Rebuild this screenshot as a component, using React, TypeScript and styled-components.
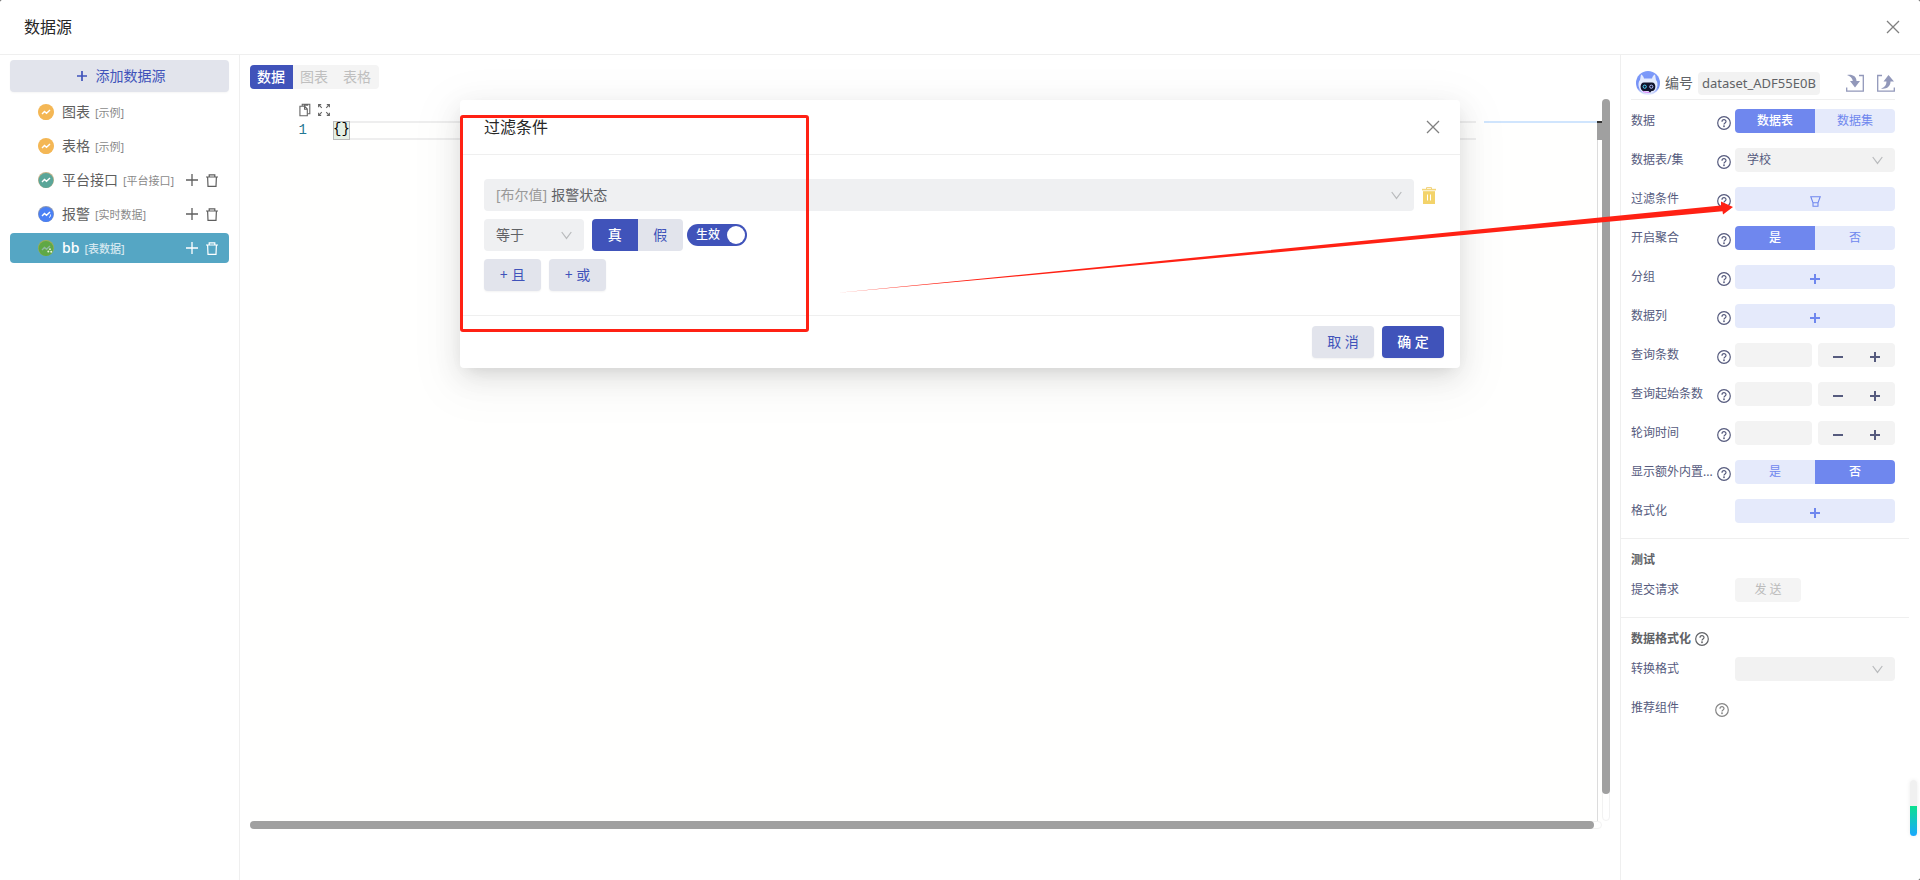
import React from "react";
import styled, { createGlobalStyle, css } from "styled-components";

const Global = createGlobalStyle`
  *, *::before, *::after { box-sizing: border-box; }
  body {
    margin: 0;
    background: #444;
    color: #606266;
    font-family: "Noto Sans", "Noto Sans CJK SC", sans-serif;
    font-size: 14px;
    line-height: 20px;
  }
  button, input, select { font: inherit; color: inherit; margin: 0; }
  h1, h2, h3, ul { margin: 0; padding: 0; font: inherit; }
`;

const primary = "#4053ba";
const accent = "#6f87ee";
const accentSoft = "#e5eafb";
const line = "#efefef";
const slate = "#565b7e";

/* ---------- shell ---------- */

const Shell = styled.div`
  position: relative;
  display: flex;
  flex-direction: column;
  min-height: 100vh;
  background: #fff;
  border-radius: 2px 2px 2px 0;
`;

const TopBar = styled.header`
  display: flex;
  align-items: center;
  justify-content: space-between;
  height: 55px;
  padding: 0 20px 0 24px;
  border-bottom: 1px solid ${line};
`;

const Title = styled.h1`
  font-size: 16px;
  line-height: 24px;
  color: #262626;
`;

const IconButton = styled.button`
  display: inline-flex;
  align-items: center;
  justify-content: center;
  padding: 0;
  border: 0;
  background: none;
  color: ${(p) => p.color || "inherit"};
  cursor: pointer;
`;

const Columns = styled.div`
  display: flex;
  flex: 1;
`;

/* ---------- source list ---------- */

const Sidebar = styled.nav`
  display: flex;
  flex-direction: column;
  flex: none;
  gap: 5px;
  width: 240px;
  padding: 5px 10px;
  border-right: 1px solid ${line};
`;

const AddButton = styled.button`
  display: flex;
  align-items: center;
  justify-content: center;
  gap: 9px;
  height: 32px;
  padding: 0 6px 0 9px;
  border: 0;
  border-radius: 4px;
  background: #e2e4ec;
  box-shadow: 0 1px 2px rgba(0, 0, 0, 0.04);
  color: ${primary};
`;

const SourceList = styled.ul`
  display: flex;
  flex-direction: column;
  gap: 4px;
  list-style: none;
`;

const SourceItem = styled.li<{ $active?: boolean }>`
  display: flex;
  align-items: center;
  height: 30px;
  padding: 0 11px 0 28px;
  border-radius: 4px;
  color: ${(p) => (p.$active ? "#fff" : "#5f5f5f")};
  font-weight: ${(p) => (p.$active ? 500 : 400)};
  background: ${(p) => (p.$active ? "#55a6c4" : "transparent")};
`;

const SourceName = styled.span`
  margin-left: 8px;
`;

const SourceTag = styled.small`
  flex: 1;
  margin-left: 5px;
  padding-top: 2px;
  font-size: 11px;
  opacity: 0.75;
`;

const SourceActions = styled.span`
  display: flex;
  gap: 8px;
`;

/* ---------- editor ---------- */

const Main = styled.main`
  flex: 1;
  min-width: 0;
  padding: 10px 10px 50px 10px;
`;

const Tabs = styled.div`
  display: flex;
  width: fit-content;
  border-radius: 4px;
  overflow: hidden;
  background: #f4f4f4;
`;

const Tab = styled.button<{ $active?: boolean }>`
  height: 24px;
  padding: 0 8px 0 7px;
  border: 0;
  background: ${(p) => (p.$active ? primary : "transparent")};
  color: ${(p) => (p.$active ? "#fff" : "#bfbfbf")};
  font-weight: ${(p) => (p.$active ? 500 : 400)};
`;

const EditorFrame = styled.div`
  display: grid;
  grid-template-columns: 1fr 8px;
  grid-template-rows: 722px 8px;
  margin-top: 10px;
`;

const EditorPane = styled.div`
  display: flex;
  flex-direction: column;
`;

const EditorTools = styled.div`
  display: flex;
  gap: 7px;
  height: 22px;
  padding-left: 49px;
  color: #666;
`;

const CodeArea = styled.div`
  display: flex;
  flex: 1;
  background: #fffffe;
  font-family: "Liberation Mono", monospace;
  line-height: 19px;
`;

const LineNumber = styled.span`
  width: 57px;
  text-align: right;
  color: #237893;
`;

const CodeLine = styled.code`
  flex: 1;
  height: 19px;
  margin-left: 26px;
  font: inherit;
  color: #000;
  border: solid #eee;
  border-width: 2px 0;
  line-height: 15px;
`;

const Bracket = styled.span`
  display: block;
  width: fit-content;
  height: 19px;
  margin: -2px 0;
  line-height: 17px;
  outline: 1px solid #b9b9b9;
  outline-offset: -1px;
  background: #e4efe4;
`;

const Minimap = styled.div`
  width: 113px;
  height: 2px;
  margin-left: 8px;
  background: #d0e5fd;
`;

const Ruler = styled.div`
  width: 5px;
  border-left: 1px solid #dcdcdc;

  &::before {
    content: "";
    display: block;
    height: 19px;
    margin-left: -1px;
    background: #a0a0a0;
    border-top: 2px solid #333;
  }
`;

const Track = styled.div`
  display: flex;
  border: 1px solid #f2f2f2;
  border-radius: 4px;
`;

const VTrack = styled(Track)`
  height: 722px;
`;

const HTrack = styled(Track)`
  height: 8px;
`;

const VThumb = styled.div`
  flex: none;
  width: 8px;
  height: 695px;
  margin: -1px;
  border-radius: 4px;
  background: #a0a0a0;
`;

const HThumb = styled.div`
  flex: 1;
  height: 8px;
  margin: -1px 7px -1px -1px;
  border-radius: 4px;
  background: #a0a0a0;
`;

/* ---------- settings panel ---------- */

const Panel = styled.aside`
  flex: none;
  width: 300px;
  padding-right: 11px;
  border-left: 1px solid ${line};
  font-size: 12px;
`;

const PanelHead = styled.div`
  display: flex;
  align-items: center;
  height: 45px;
  margin: 0 14px 8px 10px;
  padding: 12px 0 0 5px;
  border-bottom: 1px solid ${line};
  font-size: 14px;
`;

const CodeLabel = styled.label`
  margin: 0 5px;
`;

const CodeInput = styled.input`
  width: 122px;
  height: 23px;
  padding: 0 4px;
  border: 0;
  border-radius: 4px;
  background: #f2f2f2;
  font-size: 13px;
`;

const HeadActions = styled.span`
  display: flex;
  flex: 1;
  justify-content: flex-end;
  gap: 13px;
  color: #9298ba;
`;

const Section = styled.section`
  display: flex;
  flex-direction: column;
  gap: 15px;
  padding: 1px 14px 15px 10px;

  & + & {
    border-top: 1px solid ${line};
    padding-top: 10px;
  }
`;

const SectionTitle = styled.h2`
  display: flex;
  align-items: center;
  gap: 4px;
  height: 22px;
  margin-bottom: -8px;
  font-weight: 700;
`;

const Row = styled.div`
  display: grid;
  grid-template-columns: 82px 18px 160px;
  justify-content: space-between;
  align-items: center;
  height: 24px;
  color: ${slate};
`;

const RowLabel = styled.span`
  white-space: nowrap;
  overflow: hidden;
  text-overflow: ellipsis;
`;

const HelpSlot = styled.span<{ $muted?: boolean }>`
  display: flex;
  padding-top: 4px;
  color: ${(p) => (p.$muted ? "#858585" : slate)};
  margin-left: ${(p) => (p.$muted ? "0" : "2px")};
`;

const SoftButton = styled.button`
  display: flex;
  align-items: center;
  justify-content: center;
  height: 24px;
  padding: 4px 0 0;
  border: 0;
  border-radius: 4px;
  background: ${accentSoft};
  color: ${accent};
`;

const SendButton = styled.button`
  width: 66px;
  height: 24px;
  border: 0;
  border-radius: 4px;
  background: #f4f4f4;
  color: #bbb;
`;

const Stepper = styled.div`
  display: grid;
  grid-template-columns: 1fr 1fr;
  gap: 6px;
`;

const StepInput = styled.input`
  width: 100%;
  height: 24px;
  padding: 0 8px;
  border: 0;
  border-radius: 4px;
  background: #f3f3f3;
`;

const StepButtons = styled.span`
  display: flex;
  align-items: center;
  justify-content: center;
  gap: 27px;
  padding-top: 4px;
  border-radius: 4px;
  background: #f3f3f3;
`;

/* ---------- shared form controls ---------- */

const segmentTone = {
  panel: css`
    height: 24px;
    --on: ${accent};
    --off: ${accentSoft};
  `,
  dialog: css`
    width: 91px;
    height: 32px;
    --on: ${primary};
    --off: #e2e4ec;
  `,
};

const Segment = styled.div<{ $tone: "panel" | "dialog" }>`
  display: grid;
  grid-template-columns: 1fr 1fr;
  border-radius: 4px;
  overflow: hidden;
  ${(p) => segmentTone[p.$tone]}
`;

const SegmentOption = styled.label`
  display: flex;
  align-items: center;
  justify-content: center;
  background: var(--off);
  color: var(--on);

  &:has(input:checked) {
    background: var(--on);
    color: #fff;
    font-weight: 500;
  }
`;

const HiddenInput = styled.input`
  appearance: none;
  width: 0;
  height: 0;
`;

const SelectShell = styled.div<{ $width?: string; $tone?: "panel" | "dialog" }>`
  display: flex;
  align-items: center;
  gap: 4px;
  width: ${(p) => p.$width || "100%"};
  height: ${(p) => (p.$tone === "dialog" ? "32px" : "24px")};
  padding: 0 12px;
  border-radius: 4px;
  background: ${(p) => (p.$tone === "dialog" ? "#eff0f2" : "#f2f2f2")};
`;

const Select = styled.select`
  appearance: none;
  flex: 1;
  min-width: 0;
  height: 100%;
  padding: 0;
  border: 0;
  background: none;
`;

const Prefix = styled.span`
  color: #999;
`;

/* ---------- dialog ---------- */

const Dialog = styled.section`
  position: absolute;
  top: 100px;
  left: 50%;
  width: 1000px;
  margin-left: -500px;
  border-radius: 4px;
  background: #fff;
  box-shadow: 0 6px 16px -8px rgba(0, 0, 0, 0.12), 0 9px 28px rgba(0, 0, 0, 0.1),
    0 12px 48px 16px rgba(0, 0, 0, 0.03);
`;

const DialogHead = styled.div`
  display: flex;
  align-items: center;
  justify-content: space-between;
  height: 55px;
  padding: 0 20px 0 24px;
  border-bottom: 1px solid ${line};
`;

const DialogBody = styled.div`
  display: flex;
  flex-direction: column;
  gap: 8px;
  padding: 24px;
`;

const Condition = styled.div`
  display: flex;
  align-items: center;
  gap: 8px;
`;

const Switch = styled.label`
  display: flex;
  align-items: center;
  justify-content: space-between;
  width: 60px;
  height: 22px;
  margin-left: -4px;
  padding: 0 2px 0 9px;
  border-radius: 11px;
  background: ${primary};
  color: #fff;
  font-size: 12px;
  font-weight: 500;

  &::after {
    content: "";
    width: 18px;
    height: 18px;
    border-radius: 50%;
    background: #fff;
  }
`;

const DialogButton = styled.button<{ $primary?: boolean; $width?: string }>`
  min-width: ${(p) => p.$width || "62px"};
  height: 32px;
  padding: 0 12px;
  border: 0;
  border-radius: 4px;
  background: ${(p) => (p.$primary ? primary : "#e2e4ec")};
  box-shadow: 0 1px 2px rgba(0, 0, 0, 0.05);
  color: ${(p) => (p.$primary ? "#fff" : primary)};
  font-weight: ${(p) => (p.$primary ? 500 : 400)};
`;

const DialogFoot = styled.div`
  display: flex;
  justify-content: flex-end;
  gap: 8px;
  padding: 10px 16px;
  border-top: 1px solid ${line};
`;

/* ---------- annotations and floating bits ---------- */

const Highlight = styled.div`
  position: absolute;
  top: 115px;
  left: 50%;
  width: 349px;
  height: 217px;
  margin-left: -500px;
  border: 3px solid #ff2114;
  border-radius: 3px;
  pointer-events: none;
`;

const Pointer = styled.svg`
  position: absolute;
  top: 200px;
  right: 187px;
  pointer-events: none;
`;

const EdgeMeter = styled.div`
  position: absolute;
  top: 780px;
  right: 3px;
  width: 7px;
  height: 56px;
  border-radius: 4px;
  background: linear-gradient(#f0f0f0 26px, #0be08f 26px, #1aa8ff);
  box-shadow: 0 0 4px rgba(0, 0, 0, 0.08);
`;

/* ---------- icons ---------- */

const Close = () => (
  <svg width="14" height="14" viewBox="0 0 14 14" fill="none" stroke="#808080" strokeWidth="1.3">
    <path d="M1 1l12 12M13 1L1 13" />
  </svg>
);

const Plus = ({ size = 10, weight = 2 }: { size?: number; weight?: number }) => (
  <svg width={size} height={size} viewBox="0 0 10 10" fill="none" stroke="currentColor" strokeWidth={weight}>
    <path d="M5 0v10M0 5h10" />
  </svg>
);

const Minus = () => (
  <svg width="10" height="10" viewBox="0 0 10 10" stroke="currentColor" strokeWidth="2">
    <path d="M0 5h10" />
  </svg>
);

const Bin = () => (
  <svg width="12" height="13" viewBox="0 0 12 13" fill="none" stroke="currentColor" strokeWidth="1.2">
    <path d="M0 3h12M3.2 3V.8h5.6V3M1.6 3l.4 9.3h8l.4-9.3" />
  </svg>
);

const SolidBin = () => (
  <svg width="14" height="17" viewBox="0 0 14 17">
    <path d="M4.5 2V.6h5V2" fill="none" stroke="#f2d27a" />
    <path d="M0 1.8h14v1.6H0z" fill="#f3d67b" />
    <path d="M1 4.2h12V17H1z" fill="#f3d36a" />
    <path d="M5.5 7.5v6M8.5 7.5v6" stroke="#fff" />
  </svg>
);

const Chevron = () => (
  <svg width="11" height="9" viewBox="0 0 11 9" fill="none" stroke="#b9bbbd" strokeWidth="1.2">
    <path d="M.7 1l4.8 6.4L10.3 1" />
  </svg>
);

const Help = () => (
  <svg width="14" height="14" viewBox="0 0 14 14" fill="none" stroke="currentColor" strokeWidth="1.2">
    <circle cx="7" cy="7" r="6.3" />
    <path d="M5 5.700c0-2.700 4-2.700 4-.1 0 1.400-2 1.400-2 2.900" />
    <circle cx="7" cy="10.300" r=".35" />
  </svg>
);

const Funnel = () => (
  <svg width="11" height="11" viewBox="0 0 11 11" fill="none" stroke="currentColor" strokeWidth="1.1">
    <path d="M.8.8h9.400L8 6.800v3.500H3V6.800zM3 6.800h5" />
  </svg>
);

const Copy = () => (
  <svg width="12" height="14" viewBox="0 0 13 15" fill="none" stroke="currentColor" strokeWidth="1.2">
    <path d="M3.500 3V1.200h8.200v10.300H9.700M1 3.500h5.200l2.800 3V13.700H1zM6 3.500v3.200h3M5 2.200h5" />
  </svg>
);

const Expand = () => (
  <svg width="12" height="12" viewBox="0 0 12 12" fill="none" stroke="currentColor" strokeWidth="1.1">
    <path d="M.6 3.200V.6h2.600M.6.600l3.200 3.200M8.800.6h2.600v2.600M11.400.600L8.200 3.800M.6 8.800v2.600h2.600M.6 11.400l3.200-3.200M11.400 8.800v2.600H8.800M11.400 11.400L8.200 8.200" />
  </svg>
);

const SourceIcon = ({ fill, rim, kind }: { fill: string; rim?: string; kind?: "live" | "table" }) => (
  <svg width="16" height="16" viewBox="0 0 16 16" fill="none">
    <circle cx="8" cy="8" r="8" fill={rim || fill} />
    <circle cx="8" cy="8.500" r="7.400" fill={fill} />
    <path d="M4 10l2.500-2.500L8.500 9.300 12 6" stroke={kind === "table" ? "#8fb8a0" : "#fff"} strokeWidth="1.400" />
    {kind === "live" && <path d="M11 11.500c1.500-.6 1.800-2 1.400-3" stroke="#fff" />}
    {kind === "table" && (
      <g fill="#e8f3dc">
        <circle cx="12" cy="9.200" r=".9" />
        <circle cx="10.300" cy="11.500" r="1" />
        <circle cx="13.200" cy="11.800" r="1" />
      </g>
    )}
  </svg>
);

const Robot = () => (
  <svg width="24" height="24" viewBox="0 0 24 24">
    <defs>
      <linearGradient id="robotBg" x1="0" y1="0" x2="0" y2="1">
        <stop offset="0" stopColor="#7d9bfa" />
        <stop offset=".7" stopColor="#7590f5" />
        <stop offset="1" stopColor="#eef1ff" />
      </linearGradient>
    </defs>
    <circle cx="12" cy="12" r="12" fill="url(#robotBg)" />
    <path d="M5 3.500c1.500.5 2.500 2 3 4h8c.5-2 1.500-3.500 3-4l1 5.500c1.500 1.500 1.800 4 1.300 6.500C20.500 20 16 22.500 12 22.500S3.500 20 2.700 15.500C2.200 13 2.500 10.500 4 9z" fill="#e3eafe" />
    <path d="M8 11.500h8c4.500 0 4.500 8.500 0 8.500h-.5L14 21.800 12.500 20H8c-4.500 0-4.500-8.500 0-8.500z" fill="#10122b" />
    <path d="M7 20.300c2 1.200 5 1.200 6.500 1" fill="none" stroke="#d35af0" strokeWidth=".8" />
    <circle cx="8.700" cy="15.700" r="1.600" fill="none" stroke="#4fd8ff" strokeWidth="1" />
    <circle cx="15.300" cy="15.700" r="1.600" fill="none" stroke="#b9c4ff" strokeWidth="1" />
  </svg>
);

const ImportIcon = () => (
  <svg width="18" height="18" viewBox="0 0 18 18" fill="none">
    <path d="M13 1.500h4.300v15.700H.7V13.500" stroke="currentColor" strokeWidth="1.300" />
    <path d="M1 1c5-1 9.500 1 9.500 6h3.500l-5 6.500L4 7h2.800C6.500 4 4 2 1 1z" fill="currentColor" />
  </svg>
);

const ExportIcon = () => (
  <svg width="18" height="18" viewBox="0 0 18 18" fill="none">
    <path d="M5 1.500H.7v15.700h16.600V13.500" stroke="currentColor" strokeWidth="1.300" />
    <path d="M4 14.500c5 1 9.500-1.500 9.500-7H17L11.500 1 6.500 7.500h3c0 3.500-2 6-5.500 7z" fill="currentColor" />
  </svg>
);

/* ---------- pieces ---------- */

const sources = [
  { name: "图表", tag: "[示例]", icon: <SourceIcon fill="#f4b755" /> },
  { name: "表格", tag: "[示例]", icon: <SourceIcon fill="#f4b755" /> },
  { name: "平台接口", tag: "[平台接口]", icon: <SourceIcon fill="#5aa699" rim="#c3b28a" />, editable: true },
  { name: "报警", tag: "[实时数据]", icon: <SourceIcon fill="#4a80f5" rim="#8b97b5" kind="live" />, editable: true },
  { name: "bb", tag: "[表数据]", icon: <SourceIcon fill="#5fa845" rim="#9db055" kind="table" />, editable: true, active: true },
];

type ChoiceProps = { name: string; options: string[]; value: number; tone?: "panel" | "dialog" };

const Choice = ({ name, options, value, tone = "panel" }: ChoiceProps) => (
  <Segment $tone={tone} role="radiogroup" aria-label={name}>
    {options.map((o, i) => (
      <SegmentOption key={o}>
        <HiddenInput type="radio" name={name} defaultChecked={i === value} />
        {o}
      </SegmentOption>
    ))}
  </Segment>
);

const NumberField = ({ name }: { name: string }) => (
  <Stepper>
    <StepInput type="text" inputMode="numeric" aria-label={name} />
    <StepButtons>
      <IconButton aria-label="减少"><Minus /></IconButton>
      <IconButton aria-label="增加"><Plus /></IconButton>
    </StepButtons>
  </Stepper>
);

const AddField = ({ name }: { name: string }) => (
  <SoftButton aria-label={name}><Plus /></SoftButton>
);

type DropProps = { name: string; value: string; prefix?: string; width?: string; tone?: "panel" | "dialog" };

const DropDown = ({ name, value, prefix, width, tone }: DropProps) => (
  <SelectShell $width={width} $tone={tone}>
    {prefix && <Prefix>{prefix}</Prefix>}
    <Select aria-label={name} defaultValue={value}>
      <option>{value}</option>
    </Select>
    <Chevron />
  </SelectShell>
);

type FieldProps = { label: string; help?: "normal" | "muted"; children?: React.ReactNode };

const Field = ({ label, help, children }: FieldProps) => (
  <Row>
    <RowLabel>{label}</RowLabel>
    <HelpSlot $muted={help === "muted"}>{help && <Help />}</HelpSlot>
    {children || <span />}
  </Row>
);

export default function App() {
  return (
    <>
      <Global />
      <Shell>
        <TopBar>
          <Title>数据源</Title>
          <IconButton aria-label="关闭"><Close /></IconButton>
        </TopBar>

        <Columns>
          <Sidebar>
            <AddButton><Plus weight={1.7} />添加数据源</AddButton>
            <SourceList>
              {sources.map((s) => (
                <SourceItem key={s.name} $active={s.active}>
                  {s.icon}
                  <SourceName>{s.name}</SourceName>
                  <SourceTag>{s.tag}</SourceTag>
                  {s.editable && (
                    <SourceActions>
                      <IconButton aria-label="新增"><Plus size={12} weight={1.1} /></IconButton>
                      <IconButton aria-label="删除"><Bin /></IconButton>
                    </SourceActions>
                  )}
                </SourceItem>
              ))}
            </SourceList>
          </Sidebar>

          <Main>
            <Tabs role="tablist">
              <Tab role="tab" $active>数据</Tab>
              <Tab role="tab">图表</Tab>
              <Tab role="tab">表格</Tab>
            </Tabs>
            <EditorFrame>
              <EditorPane>
                <EditorTools>
                  <IconButton aria-label="复制"><Copy /></IconButton>
                  <IconButton aria-label="展开"><Expand /></IconButton>
                </EditorTools>
                <CodeArea>
                  <LineNumber>1</LineNumber>
                  <CodeLine><Bracket>{"{}"}</Bracket></CodeLine>
                  <Minimap />
                  <Ruler />
                </CodeArea>
              </EditorPane>
              <VTrack><VThumb /></VTrack>
              <HTrack><HThumb /></HTrack>
            </EditorFrame>
          </Main>

          <Panel>
            <PanelHead>
              <Robot />
              <CodeLabel htmlFor="code">编号</CodeLabel>
              <CodeInput id="code" defaultValue="dataset_ADF55E0B" />
              <HeadActions>
                <IconButton aria-label="导入"><ImportIcon /></IconButton>
                <IconButton aria-label="导出"><ExportIcon /></IconButton>
              </HeadActions>
            </PanelHead>
            <Section>
              <Field label="数据" help="normal"><Choice name="数据" options={["数据表", "数据集"]} value={0} /></Field>
              <Field label="数据表/集" help="normal"><DropDown name="数据表/集" value="学校" /></Field>
              <Field label="过滤条件" help="normal"><SoftButton aria-label="过滤条件"><Funnel /></SoftButton></Field>
              <Field label="开启聚合" help="normal"><Choice name="开启聚合" options={["是", "否"]} value={0} /></Field>
              <Field label="分组" help="normal"><AddField name="分组" /></Field>
              <Field label="数据列" help="normal"><AddField name="数据列" /></Field>
              <Field label="查询条数" help="normal"><NumberField name="查询条数" /></Field>
              <Field label="查询起始条数" help="normal"><NumberField name="查询起始条数" /></Field>
              <Field label="轮询时间" help="normal"><NumberField name="轮询时间" /></Field>
              <Field label="显示额外内置..." help="normal"><Choice name="显示额外内置" options={["是", "否"]} value={1} /></Field>
              <Field label="格式化"><AddField name="格式化" /></Field>
            </Section>
            <Section>
              <SectionTitle>测试</SectionTitle>
              <Field label="提交请求"><SendButton disabled>发 送</SendButton></Field>
            </Section>
            <Section>
              <SectionTitle>数据格式化<Help /></SectionTitle>
              <Field label="转换格式"><DropDown name="转换格式" value="" /></Field>
              <Field label="推荐组件" help="muted" />
            </Section>
          </Panel>
        </Columns>

        <Dialog role="dialog" aria-labelledby="filter-title">
          <DialogHead>
            <Title as="h2" id="filter-title">过滤条件</Title>
            <IconButton aria-label="关闭"><Close /></IconButton>
          </DialogHead>
          <DialogBody>
            <Condition>
              <DropDown name="字段" prefix="[布尔值]" value="报警状态" tone="dialog" />
              <IconButton aria-label="删除条件"><SolidBin /></IconButton>
            </Condition>
            <Condition>
              <DropDown name="比较" value="等于" width="100px" tone="dialog" />
              <Choice name="值" options={["真", "假"]} value={0} tone="dialog" />
              <Switch>
                生效
                <HiddenInput type="checkbox" role="switch" defaultChecked />
              </Switch>
            </Condition>
            <Condition>
              <DialogButton $width="57px">+ 且</DialogButton>
              <DialogButton $width="57px">+ 或</DialogButton>
            </Condition>
          </DialogBody>
          <DialogFoot>
            <DialogButton>取 消</DialogButton>
            <DialogButton $primary>确 定</DialogButton>
          </DialogFoot>
        </Dialog>

        <Highlight />
        <Pointer width="897" height="96" viewBox="0 0 897 96">
          <path d="M0 93L885 5.500 885 1.500 897 7 887 14.500 886.500 11.200z" fill="#ff2114" />
        </Pointer>
        <EdgeMeter />
      </Shell>
    </>
  );
}
